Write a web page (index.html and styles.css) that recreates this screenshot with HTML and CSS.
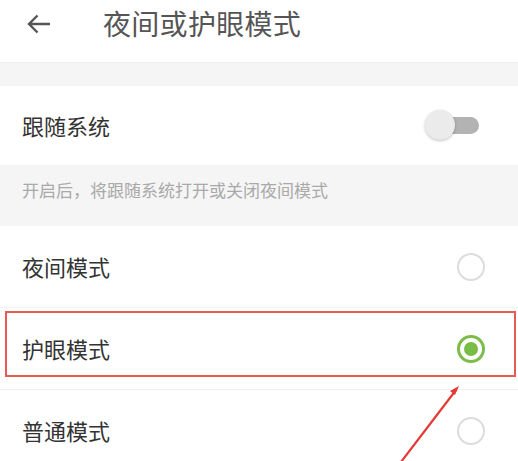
FILE: index.html
```html
<!DOCTYPE html>
<html lang="zh-CN">
<head>
    <meta charset="UTF-8">
    <title>夜间或护眼模式</title>
    <meta name="viewport" content="width=device-width">
    <link rel="stylesheet" href="styles.css">
</head>
<body>
    <header class="top-bar">
        <svg class="back" width="24" height="20" viewBox="0 0 24 20">
            <path d="M23 10H2M10.5 1.5L2 10l8.5 8.5" fill="none" stroke="#555" stroke-width="2.4"/>
        </svg>
        <h1>夜间或护眼模式</h1>
    </header>

    <div class="gap"></div>

    <div class="row">
        <span>跟随系统</span>
        <span class="switch"><span class="knob"></span></span>
    </div>
    <p class="hint">开启后，将跟随系统打开或关闭夜间模式</p>

    <div class="row line">
        <span>夜间模式</span>
        <span class="radio"></span>
    </div>
    <div class="row line marked">
        <span>护眼模式</span>
        <span class="radio on"></span>
    </div>
    <div class="row line">
        <span>普通模式</span>
        <span class="radio"></span>
    </div>

    <!-- red annotation arrow -->
    <svg class="arrow" width="518" height="461" viewBox="0 0 518 461">
        <path d="M401 462L456 390" stroke="#e53935" stroke-width="2.2" fill="none"/>
        <path d="M459 386L450 391L455 395Z" fill="#e53935"/>
    </svg>
</body>
</html>
```

FILE: styles.css
```css
*,
*::after,
*::before{
    padding: 0;
    margin: 0;
    box-sizing: border-box;
}
html{
    font: normal 22px/1.2 "Noto Sans CJK SC", "Noto Sans", sans-serif;
    color: #333;
}
body{
    width: 518px;
    height: 461px;
    overflow: hidden;
    background: #fff;
    position: relative;
}
.top-bar{
    height: 63px;
    display: flex;
    align-items: center;
    padding: 0 0 14px 27px;
    border-bottom: 1px solid #ececec;
}
.top-bar h1{
    font-size: 28px;
    font-weight: normal;
    color: #555;
    margin-left: 52px;
    letter-spacing: 0.3px;
}
.gap{
    height: 23px;
    background: #f5f5f5;
}
.row{
    height: 79px;
    display: flex;
    align-items: center;
    justify-content: space-between;
    padding: 0 32px 0 22px;
    position: relative;
}
.row.line{
    height: 82px;
    border-bottom: 1px solid #f2f2f2;
}
.hint{
    height: 61px;
    background: #f5f5f5;
    color: #a9a9a9;
    font-size: 17px;
    padding: 15px 0 0 22px;
}
.switch{
    width: 46px;
    height: 17px;
    margin-right: 7px;
    background: #b3b3b3;
    border-radius: 9px;
    position: relative;
}
.switch .knob{
    position: absolute;
    left: -8px;
    top: -7px;
    width: 30px;
    height: 30px;
    border-radius: 50%;
    background: #ebebeb;
    box-shadow: 0 1px 3px rgba(0, 0, 0, 0.25);
}
.radio{
    width: 28px;
    height: 28px;
    margin-right: 1px;
    border-radius: 50%;
    border: 2px solid #dcdcdc;
    position: relative;
}
.radio.on{
    border: 3px solid #7cbd4a;
}
.radio.on::after{
    content: "";
    position: absolute;
    left: 4px;
    top: 4px;
    width: 14px;
    height: 14px;
    border-radius: 50%;
    background: #78bd45;
}
.marked::before{
    content: "";
    position: absolute;
    left: 5px;
    right: 2px;
    top: 3px;
    height: 66px;
    border: 2px solid #ea5a55;
}
.arrow{
    position: absolute;
    left: 0;
    top: 0;
    pointer-events: none;
}
```
